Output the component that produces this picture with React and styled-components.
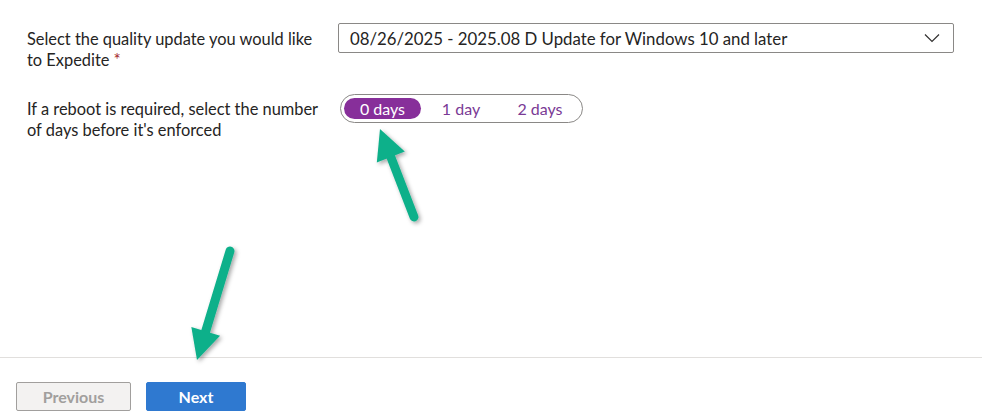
import styled, { createGlobalStyle } from "styled-components";

const GlobalStyle = createGlobalStyle`
    body {
        margin: 0;
        background: #ffffff;
        font-family: Lato, "Open Sans", sans-serif;
        color: #252423;
    }
`;

const Page = styled.div`
    position: relative;
    width: 982px;
    height: 418px;
    overflow: hidden;
    display: flex;
    flex-direction: column;
`;

const Form = styled.div`
    flex: 1;
    display: flex;
    flex-direction: column;
    gap: 23px;
    padding: 23px 28px 0 27px;
`;

const Row = styled.div`
    display: grid;
    grid-template-columns: 311px 1fr;
    align-items: start;
`;

const Label = styled.div`
    font-size: 16.4px;
    line-height: 21px;
    padding-top: ${props => props.offset || 0}px;
    padding-right: 18px;
`;

const Required = styled.span`
    color: #a4262c;
    font-size: 17px;
`;

const Select = styled.div`
    height: 30px;
    box-sizing: border-box;
    border: 1px solid #8a8886;
    border-radius: 2px;
    display: flex;
    align-items: center;
    justify-content: space-between;
    padding: 0 13px 0 11px;
    font-size: 16.8px;
`;

const Pills = styled.div`
    display: inline-flex;
    align-items: center;
    width: 243px;
    height: 29px;
    box-sizing: border-box;
    border: 1px solid #8a8886;
    border-radius: 15px;
    padding: 0 3px;
    margin-left: 2px;
    margin-top: 1px;
`;

const Pill = styled.div`
    height: 21px;
    border-radius: 11px;
    display: flex;
    align-items: center;
    justify-content: center;
    width: ${props => props.w}px;
    font-size: 16px;
    background: ${props => (props.active ? "#872f9a" : "transparent")};
    color: ${props => (props.active ? "#ffffff" : "#7a3a95")};
`;

const Footer = styled.div`
    border-top: 1px solid #e1dfdd;
    height: 61px;
    box-sizing: border-box;
    display: flex;
    align-items: flex-start;
    gap: 15px;
    padding: 24px 0 0 16px;
`;

const Button = styled.button`
    height: 29px;
    width: ${props => props.w}px;
    box-sizing: border-box;
    border-radius: 2px;
    font-family: Lato, "Open Sans", sans-serif;
    font-size: 16px;
    font-weight: 700;
    border: 1px solid ${props => (props.primary ? "#2f79d0" : "#a19f9d")};
    background: ${props => (props.primary ? "#2f79d0" : "#f3f2f1")};
    color: ${props => (props.primary ? "#ffffff" : "#a19f9d")};
    padding: 0;
`;

const Overlay = styled.svg`
    position: absolute;
    left: 0;
    top: 0;
    pointer-events: none;
`;

const Arrow = ({ x1, y1, x2, y2 }) => {
    const ang = Math.atan2(y2 - y1, x2 - x1);
    const len = 30;
    const half = 15;
    const bx = x2 - Math.cos(ang) * len;
    const by = y2 - Math.sin(ang) * len;
    const px = -Math.sin(ang) * half;
    const py = Math.cos(ang) * half;
    const sx = x2 - Math.cos(ang) * (len - 4);
    const sy = y2 - Math.sin(ang) * (len - 4);
    return (
        <g filter="url(#shadow)">
            <line x1={x1} y1={y1} x2={sx} y2={sy} stroke="#10b08a" strokeWidth="9" strokeLinecap="round" />
            <polygon points={`${x2},${y2} ${bx + px},${by + py} ${bx - px},${by - py}`} fill="#10b08a" />
        </g>
    );
};

const App = () => {
    return (
        <Page>
            <GlobalStyle />
            <Form>
                <Row>
                    <Label offset={5}>
                        Select the quality update you would like to Expedite <Required>*</Required>
                    </Label>
                    <Select>
                        <span>08/26/2025 - 2025.08 D Update for Windows 10 and later</span>
                        <svg width="16" height="10" viewBox="0 0 16 10">
                            <path d="M1 1.5 L8 8.5 L15 1.5" fill="none" stroke="#323130" strokeWidth="1.2" />
                        </svg>
                    </Select>
                </Row>
                <Row>
                    <Label offset={5}>
                        If a reboot is required, select the number of days before it's enforced
                    </Label>
                    <div>
                        <Pills>
                            <Pill active w={77}>0 days</Pill>
                            <Pill w={80}>1 day</Pill>
                            <Pill w={78}>2 days</Pill>
                        </Pills>
                    </div>
                </Row>
            </Form>
            <Footer>
                <Button w={115}>Previous</Button>
                <Button primary w={100}>Next</Button>
            </Footer>
            <Overlay width="982" height="418">
                <defs>
                    <filter id="shadow" x="-50%" y="-50%" width="200%" height="200%">
                        <feDropShadow dx="2" dy="2" stdDeviation="2" floodColor="#000" floodOpacity="0.35" />
                    </filter>
                </defs>
                <Arrow x1={414} y1={217} x2={380} y2={129} />
                <Arrow x1={230} y1={251} x2={197} y2={360} />
            </Overlay>
        </Page>
    );
};

export default App;
